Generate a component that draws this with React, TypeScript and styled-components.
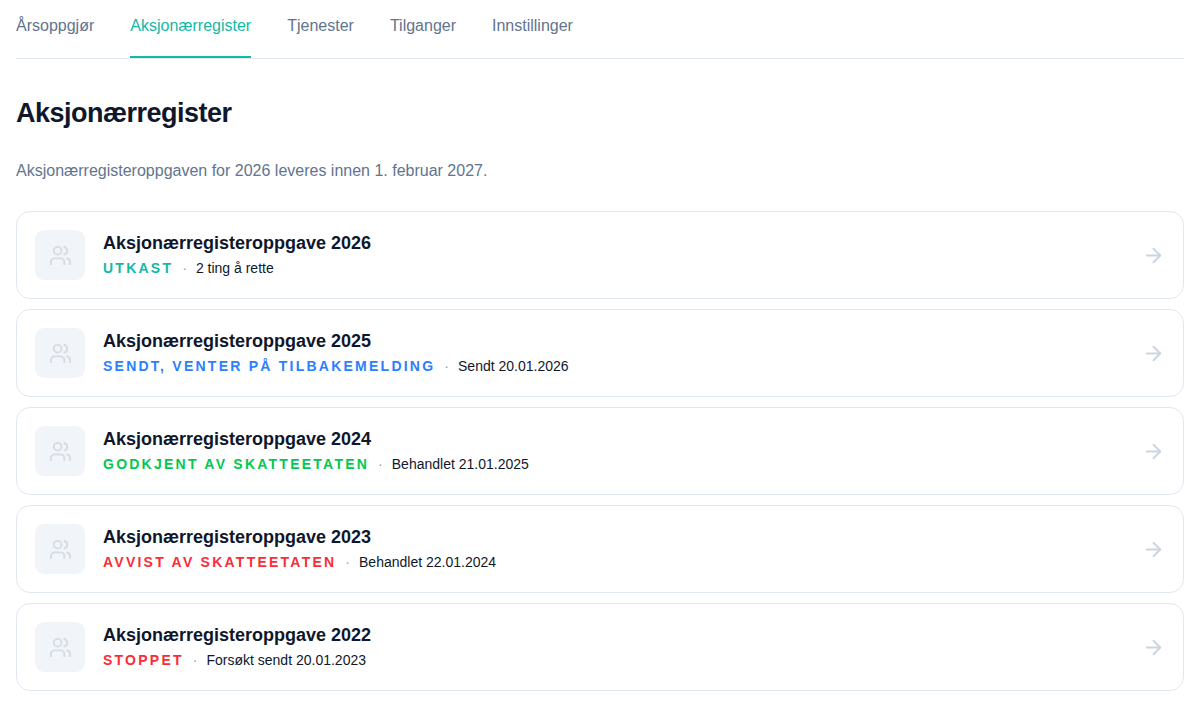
import React from 'react';
import styled, { createGlobalStyle } from 'styled-components';
import { ArrowRight, Users } from 'lucide-react';

const GlobalStyle = createGlobalStyle`
  *, *::before, *::after { box-sizing: border-box; }
  body {
    margin: 0;
    background: #ffffff;
    color: #0f172b;
    font-family: "Liberation Sans", Arial, sans-serif;
    font-size: 16px;
    line-height: 24px;
  }
`;

const Page = styled.div`
  padding: 0 16px 16px;
`;

const Tabs = styled.nav`
  display: flex;
  gap: 36px;
  border-bottom: 1px solid #e2e8f0;
`;

const Tab = styled.a<{ $active?: boolean }>`
  padding: 14px 0 18px;
  border-bottom: 2px solid ${p => (p.$active ? '#14b8a6' : 'transparent')};
  color: ${p => (p.$active ? '#14b8a6' : '#62748e')};
  text-decoration: none;
`;

const Heading = styled.h1`
  margin: 36px 0 0;
  font-size: 27px;
  line-height: 36px;
  font-weight: 700;
  letter-spacing: -0.5px;
`;

const Intro = styled.p`
  margin: 28px 0 0;
  color: #62748e;
`;

const List = styled.ul`
  display: grid;
  gap: 10px;
  margin: 28px 0 0;
  padding: 0;
  list-style: none;
`;

const Card = styled.a`
  display: flex;
  align-items: center;
  gap: 18px;
  padding: 18px;
  border: 1px solid #e2e8f0;
  border-radius: 14px;
  color: inherit;
  text-decoration: none;
`;

const IconTile = styled.span`
  display: grid;
  place-items: center;
  flex: none;
  width: 50px;
  height: 50px;
  border-radius: 9px;
  background: #f1f5f9;
  color: #d5dce5;
`;

const Details = styled.div`
  flex: 1;
  min-width: 0;
`;

const CardTitle = styled.h2`
  margin: 0;
  font-size: 18px;
  line-height: 26px;
  font-weight: 700;
`;

const Meta = styled.div`
  display: flex;
  align-items: baseline;
  flex-wrap: wrap;
  gap: 0 9px;
  font-size: 14px;
  line-height: 24px;
`;

const Status = styled.span<{ $color: string }>`
  color: ${p => p.$color};
  font-weight: 700;
  letter-spacing: 0.16em;
  text-transform: uppercase;
`;

const Dot = styled.span`
  color: #90a1b9;
`;

const Arrow = styled(ArrowRight)`
  flex: none;
  color: #cad5e2;
`;

const tabs = ['Årsoppgjør', 'Aksjonærregister', 'Tjenester', 'Tilganger', 'Innstillinger'];

const reports = [
  { year: 2026, status: 'Utkast', color: '#14b8a6', note: '2 ting å rette' },
  { year: 2025, status: 'Sendt, venter på tilbakemelding', color: '#2b7fff', note: 'Sendt 20.01.2026' },
  { year: 2024, status: 'Godkjent av Skatteetaten', color: '#00c950', note: 'Behandlet 21.01.2025' },
  { year: 2023, status: 'Avvist av Skatteetaten', color: '#fb2c36', note: 'Behandlet 22.01.2024' },
  { year: 2022, status: 'Stoppet', color: '#fb2c36', note: 'Forsøkt sendt 20.01.2023' },
];

export default function App() {
  return (
    <>
      <GlobalStyle />
      <Page>
        <Tabs>
          {tabs.map(name => {
            const active = name === 'Aksjonærregister';
            return (
              <Tab key={name} href="#" $active={active} aria-current={active ? 'page' : undefined}>
                {name}
              </Tab>
            );
          })}
        </Tabs>
        <main>
          <Heading>Aksjonærregister</Heading>
          <Intro>Aksjonærregisteroppgaven for 2026 leveres innen 1. februar 2027.</Intro>
          <List>
            {reports.map(r => (
              <li key={r.year}>
                <Card href="#">
                  <IconTile>
                    <Users size={23} strokeWidth={2} aria-hidden />
                  </IconTile>
                  <Details>
                    <CardTitle>Aksjonærregisteroppgave {r.year}</CardTitle>
                    <Meta>
                      <Status $color={r.color}>{r.status}</Status>
                      <Dot>·</Dot>
                      <span>{r.note}</span>
                    </Meta>
                  </Details>
                  <Arrow size={23} strokeWidth={2} aria-hidden />
                </Card>
              </li>
            ))}
          </List>
        </main>
      </Page>
    </>
  );
}
